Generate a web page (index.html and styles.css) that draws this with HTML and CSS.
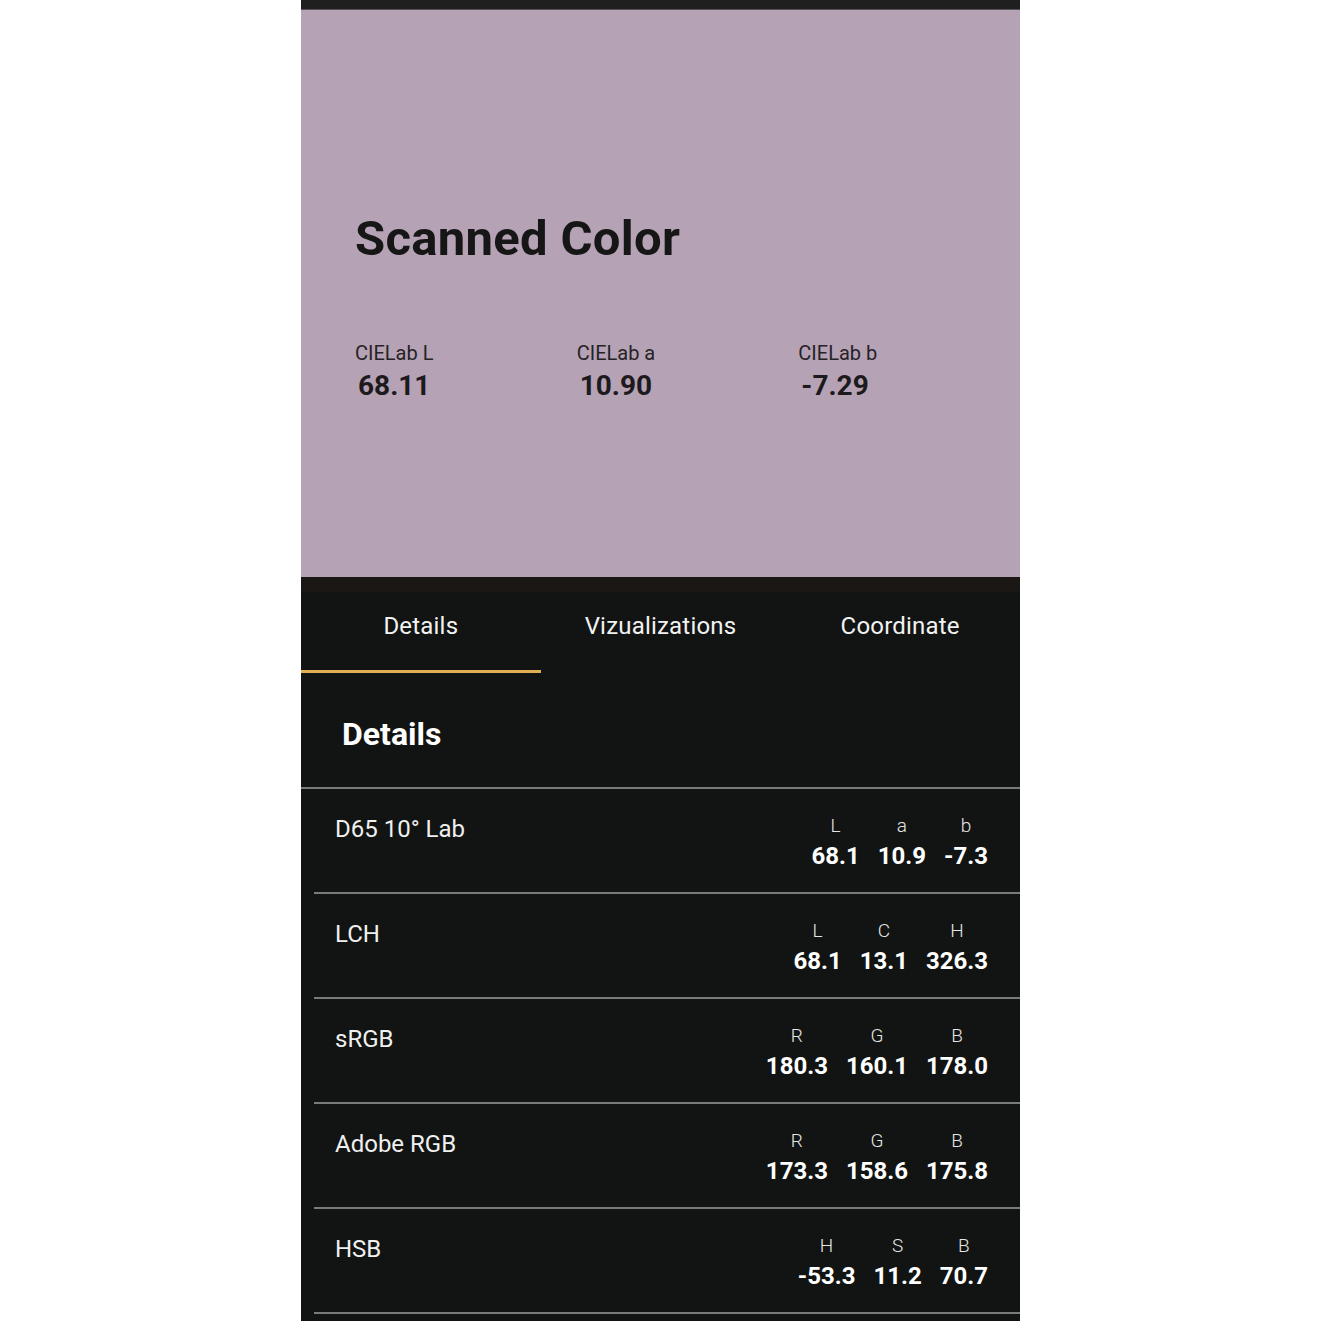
FILE: index.html
```html
<!DOCTYPE html>
<html>
<head>
<meta charset="utf-8">
<link rel="stylesheet" href="styles.css">
</head>
<body>
<div class="phone">
  <div class="statusbar"></div>
  <section class="swatch">
    <h1 class="title">Scanned Color</h1>
    <div class="lab">
      <div class="lab-item"><div class="lab-label">CIELab L</div><div class="lab-value">68.11</div></div>
      <div class="lab-item"><div class="lab-label">CIELab a</div><div class="lab-value">10.90</div></div>
      <div class="lab-item"><div class="lab-label">CIELab b</div><div class="lab-value">-7.29</div></div>
    </div>
  </section>
  <nav class="tabs">
    <div class="tab active">Details</div>
    <div class="tab">Vizualizations</div>
    <div class="tab">Coordinate</div>
  </nav>
  <h2 class="section-title">Details</h2>
  <div class="rows">
    <div class="row">
      <div class="row-label">D65 10° Lab</div>
      <div class="vals">
        <div class="val"><span class="k">L</span><span class="v">68.1</span></div>
        <div class="val"><span class="k">a</span><span class="v">10.9</span></div>
        <div class="val"><span class="k">b</span><span class="v">-7.3</span></div>
      </div>
    </div>
    <div class="row">
      <div class="row-label">LCH</div>
      <div class="vals">
        <div class="val"><span class="k">L</span><span class="v">68.1</span></div>
        <div class="val"><span class="k">C</span><span class="v">13.1</span></div>
        <div class="val"><span class="k">H</span><span class="v">326.3</span></div>
      </div>
    </div>
    <div class="row">
      <div class="row-label">sRGB</div>
      <div class="vals">
        <div class="val"><span class="k">R</span><span class="v">180.3</span></div>
        <div class="val"><span class="k">G</span><span class="v">160.1</span></div>
        <div class="val"><span class="k">B</span><span class="v">178.0</span></div>
      </div>
    </div>
    <div class="row">
      <div class="row-label">Adobe RGB</div>
      <div class="vals">
        <div class="val"><span class="k">R</span><span class="v">173.3</span></div>
        <div class="val"><span class="k">G</span><span class="v">158.6</span></div>
        <div class="val"><span class="k">B</span><span class="v">175.8</span></div>
      </div>
    </div>
    <div class="row">
      <div class="row-label">HSB</div>
      <div class="vals">
        <div class="val"><span class="k">H</span><span class="v">-53.3</span></div>
        <div class="val"><span class="k">S</span><span class="v">11.2</span></div>
        <div class="val"><span class="k">B</span><span class="v">70.7</span></div>
      </div>
    </div>
  </div>
</div>
</body>
</html>
```
FILE: styles.css
```css
* { box-sizing: border-box; }
html, body { margin: 0; padding: 0; background: #ffffff; }
body {
  font-family: Roboto, "Liberation Sans", sans-serif;
  display: flex;
  justify-content: center;
  height: 1321px;
  overflow: hidden;
}
.phone {
  width: 719px;
  height: 1321px;
  background: #111412;
  display: flex;
  flex-direction: column;
}
.statusbar {
  height: 10px;
  background: #1f1f1f;
  border-bottom: 1px solid #555055;
}
.swatch {
  height: 567px;
  background: #b5a2b5;
  padding: 199px 0 0 54px;
}
.title {
  margin: 0;
  font-size: 49px;
  line-height: 60px;
  font-weight: 700;
  color: #161616;
  letter-spacing: 0.3px;
}
.lab {
  display: flex;
  margin-top: 71px;
}
.lab-item {
  width: 222px;
}
.lab-label {
  font-size: 20px;
  line-height: 26px;
  color: #262226;
}
.lab-value {
  font-size: 28px;
  line-height: 36px;
  font-weight: 700;
  color: #1c1a1c;
  margin-left: 3px;
  margin-top: 2px;
}
.tabs {
  display: flex;
  height: 96px;
  background: linear-gradient(#1b1715 0, #1b1715 14px, #111412 16px);
}
.tab {
  flex: 1;
  display: flex;
  align-items: center;
  justify-content: center;
  padding-top: 5px;
  color: #f2f2f2;
  font-size: 24px;
  letter-spacing: 0.2px;
  border-bottom: 3px solid transparent;
}
.tab.active {
  border-bottom-color: #e2ae55;
}
.section-title {
  margin: 0;
  height: 116px;
  padding: 43px 0 0 41px;
  font-size: 32px;
  line-height: 36px;
  font-weight: 700;
  color: #ffffff;
  border-bottom: 2px solid #7a7a7a;
}
.rows {
  display: flex;
  flex-direction: column;
}
.row {
  height: 105px;
  margin-left: 13px;
  border-bottom: 2px solid #7a7a7a;
  display: flex;
  justify-content: space-between;
  padding: 26px 32px 0 21px;
}
.row-label {
  color: #f0f0f0;
  font-size: 24px;
  line-height: 28px;
}
.vals {
  display: flex;
  gap: 18px;
}
.val {
  display: flex;
  flex-direction: column;
  align-items: center;
}
.k {
  color: #e6e6e6;
  font-size: 19px;
  font-weight: 300;
  line-height: 22px;
}
.v {
  color: #ffffff;
  font-size: 24px;
  font-weight: 700;
  line-height: 32px;
  margin-top: 3px;
}
```
